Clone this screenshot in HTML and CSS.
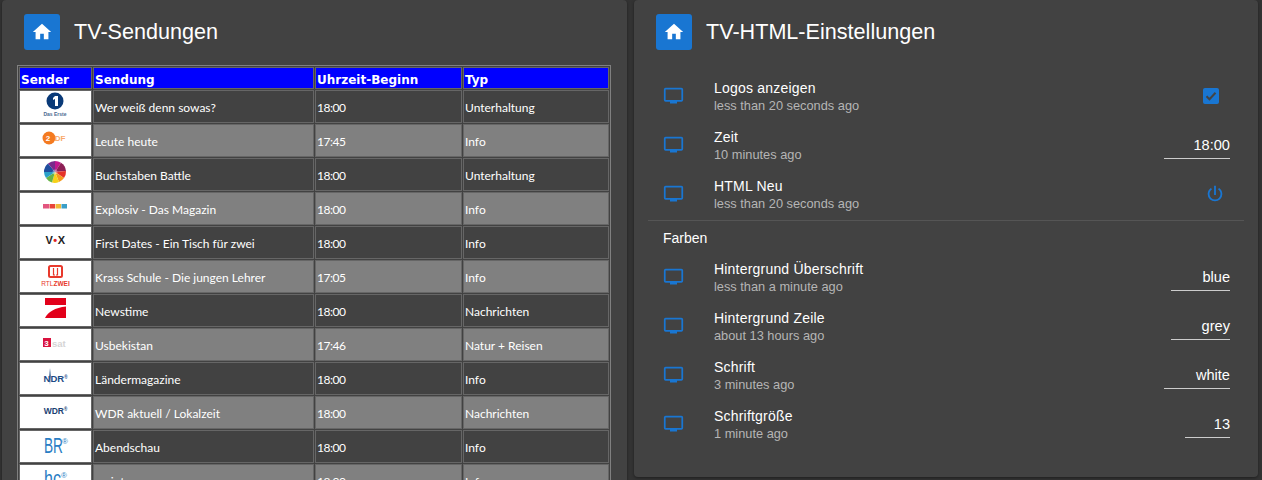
FILE: index.html
```html
<!DOCTYPE html>
<html lang="de">
<head>
<meta charset="utf-8">
<title>TV</title>
<link rel="stylesheet" href="styles.css">
</head>
<body>
<svg class="defs" width="0" height="0" aria-hidden="true">
  <symbol id="tv" viewBox="0 0 24 24"><path d="M21,17H3V5H21M21,3H3A2,2 0 0,0 1,5V17A2,2 0 0,0 3,19H8V21H16V19H21A2,2 0 0,0 23,17V5C23,3.89 22.1,3 21,3Z"/></symbol>
  <symbol id="home" viewBox="0 0 24 24"><path d="M10,20V14H14V20H19V12H22L12,3L2,12H5V20H10Z"/></symbol>
</svg>
<main class="page">
  <section class="card card-left">
    <header class="card-head">
      <span class="home-btn"><svg class="home-icon"><use href="#home"/></svg></span>
      <h1 class="card-title">TV-Sendungen</h1>
    </header>
    <table class="tv">
      <thead>
        <tr><th class="c1">Sender</th><th class="c2">Sendung</th><th class="c3">Uhrzeit-Beginn</th><th>Typ</th></tr>
      </thead>
      <tbody>
        <tr>
          <td class="logo"><svg viewBox="0 0 71 31" class="logo-svg"><circle cx="35" cy="10" r="8.500" fill="#0a3a78"/><path d="M35 5h3v10h-3V8l-2 1V7z" fill="#fff"/><text x="35" y="25" class="t-erste">Das Erste</text></svg></td>
          <td>Wer weiß denn sowas?</td><td>18:00</td><td>Unterhaltung</td>
        </tr>
        <tr class="alt">
          <td class="logo"><svg viewBox="0 0 71 31" class="logo-svg"><circle cx="29" cy="13" r="6.500" fill="#f47a20"/><text x="28" y="16" class="t-zdf-2">2</text><text x="40" y="16" class="t-zdf">DF</text></svg></td>
          <td>Leute heute</td><td>17:45</td><td>Info</td>
        </tr>
        <tr>
          <td class="logo"><svg viewBox="0 0 71 31" class="logo-svg"><path d="M35 2a11 11 0 0 1 6 1.800L35 13z" fill="#c2188e"/><path d="M41 3.800a11 11 0 0 1 5 8.200L35 13z" fill="#8c1f55"/><path d="M46 12a11 11 0 0 1-2 7L35 13z" fill="#e63329"/><path d="M44 19a11 11 0 0 1-5 4L35 13z" fill="#f59a1c"/><path d="M39 23a11 11 0 0 1-7 .6L35 13z" fill="#f7d117"/><path d="M32 23.600a11 11 0 0 1-6-4.600L35 13z" fill="#67b346"/><path d="M26 19a11 11 0 0 1-2-6L35 13z" fill="#2aa0c9"/><path d="M24 13a11 11 0 0 1 4-8.500L35 13z" fill="#1f4e9e"/><path d="M28 4.500a11 11 0 0 1 7-2.500V13z" fill="#7a2a8b"/><circle cx="35" cy="13" r="2.500" fill="#fff" opacity=".35"/></svg></td>
          <td>Buchstaben Battle</td><td>18:00</td><td>Unterhaltung</td>
        </tr>
        <tr class="alt">
          <td class="logo"><svg viewBox="0 0 71 31" class="logo-svg"><rect x="23" y="11" width="6" height="4.500" fill="#e2557f"/><rect x="29.500" y="11" width="5.500" height="4.500" fill="#e8453a"/><rect x="35.500" y="11" width="5.500" height="4.500" fill="#f0b93a"/><rect x="41.500" y="11" width="5.500" height="4.500" fill="#3a9fc8"/></svg></td>
          <td>Explosiv - Das Magazin</td><td>18:00</td><td>Info</td>
        </tr>
        <tr>
          <td class="logo"><svg viewBox="0 0 71 31" class="logo-svg"><text x="35.500" y="17" class="t-vox">V<tspan class="t-dot">•</tspan>X</text></svg></td>
          <td>First Dates - Ein Tisch für zwei</td><td>18:00</td><td>Info</td>
        </tr>
        <tr class="alt">
          <td class="logo"><svg viewBox="0 0 71 31" class="logo-svg"><rect x="29" y="5" width="13" height="11" rx="1.500" fill="none" stroke="#e8392c" stroke-width="2"/><path d="M33.500 7v7h1.500M37.500 7v7h-1.500" fill="none" stroke="#e8392c" stroke-width="1.200"/><text x="35.500" y="25" class="t-rtl2">RTL<tspan class="t-rtl2b">ZWEI</tspan></text></svg></td>
          <td>Krass Schule - Die jungen Lehrer</td><td>17:05</td><td>Info</td>
        </tr>
        <tr>
          <td class="logo"><svg viewBox="0 0 71 31" class="logo-svg"><path d="M25 3h21v7H25z" fill="#e2001a"/><path d="M25 23c3-6 10-10.500 21-11.500V23z" fill="#e2001a"/></svg></td>
          <td>Newstime</td><td>18:00</td><td>Nachrichten</td>
        </tr>
        <tr class="alt">
          <td class="logo"><svg viewBox="0 0 71 31" class="logo-svg"><rect x="23" y="9" width="8" height="9" fill="#d9123f"/><text x="26.500" y="17" class="t-3">3</text><text x="32" y="18" class="t-sat">sat</text></svg></td>
          <td>Usbekistan</td><td>17:46</td><td>Natur + Reisen</td>
        </tr>
        <tr>
          <td class="logo"><svg viewBox="0 0 71 31" class="logo-svg"><text x="35.500" y="19" class="t-ndr">NDR<tspan class="t-reg" dy="-3">®</tspan></text><path d="M30 5l.7 8-.7 9-.7-9z" fill="#1b4b86"/></svg></td>
          <td>Ländermagazine</td><td>18:00</td><td>Info</td>
        </tr>
        <tr class="alt">
          <td class="logo"><svg viewBox="0 0 71 31" class="logo-svg"><text x="35.500" y="17" class="t-wdr">WDR<tspan class="t-reg" dy="-3">®</tspan></text></svg></td>
          <td>WDR aktuell / Lokalzeit</td><td>18:00</td><td>Nachrichten</td>
        </tr>
        <tr>
          <td class="logo"><svg viewBox="0 0 71 31" class="logo-svg"><text x="24" y="22" class="t-br" textLength="19" lengthAdjust="spacingAndGlyphs">BR</text><text x="42" y="13" class="t-breg">®</text></svg></td>
          <td>Abendschau</td><td>18:00</td><td>Info</td>
        </tr>
        <tr class="alt">
          <td class="logo"><svg viewBox="0 0 71 31" class="logo-svg"><text x="24" y="21" class="t-br" textLength="17" lengthAdjust="spacingAndGlyphs">hc</text><text x="41" y="13" class="t-breg">®</text></svg></td>
          <td>maintower</td><td>18:00</td><td>Info</td>
        </tr>
      </tbody>
    </table>
  </section>

  <section class="card card-right">
    <header class="card-head">
      <span class="home-btn"><svg class="home-icon"><use href="#home"/></svg></span>
      <h1 class="card-title">TV-HTML-Einstellungen</h1>
    </header>
    <div class="settings">
      <div class="row">
        <svg class="tv-icon"><use href="#tv"/></svg>
        <div class="info"><div class="name">Logos anzeigen</div><div class="sub">less than 20 seconds ago</div></div>
        <span class="check"><svg viewBox="0 0 16 16"><path d="M3.500 8.200l3 3 6-6.400" fill="none" stroke="#444" stroke-width="2"/></svg></span>
      </div>
      <div class="row">
        <svg class="tv-icon"><use href="#tv"/></svg>
        <div class="info"><div class="name">Zeit</div><div class="sub">10 minutes ago</div></div>
        <div class="field w66">18:00</div>
      </div>
      <div class="row">
        <svg class="tv-icon"><use href="#tv"/></svg>
        <div class="info"><div class="name">HTML Neu</div><div class="sub">less than 20 seconds ago</div></div>
        <svg class="power" viewBox="0 0 24 24"><path d="M16.560,5.440L15.110,6.890C16.840,7.940 18,9.830 18,12A6,6 0 0,1 12,18A6,6 0 0,1 6,12C6,9.830 7.160,7.940 8.880,6.880L7.440,5.440C5.360,6.880 4,9.280 4,12A8,8 0 0,0 12,20A8,8 0 0,0 20,12C20,9.280 18.640,6.880 16.560,5.440M13,3H11V13H13"/></svg>
      </div>
      <div class="divider"></div>
      <div class="section-label">Farben</div>
      <div class="row">
        <svg class="tv-icon"><use href="#tv"/></svg>
        <div class="info"><div class="name">Hintergrund Überschrift</div><div class="sub">less than a minute ago</div></div>
        <div class="field w59">blue</div>
      </div>
      <div class="row">
        <svg class="tv-icon"><use href="#tv"/></svg>
        <div class="info"><div class="name">Hintergrund Zeile</div><div class="sub">about 13 hours ago</div></div>
        <div class="field w59">grey</div>
      </div>
      <div class="row">
        <svg class="tv-icon"><use href="#tv"/></svg>
        <div class="info"><div class="name">Schrift</div><div class="sub">3 minutes ago</div></div>
        <div class="field w66">white</div>
      </div>
      <div class="row">
        <svg class="tv-icon"><use href="#tv"/></svg>
        <div class="info"><div class="name">Schriftgröße</div><div class="sub">1 minute ago</div></div>
        <div class="field w45">13</div>
      </div>
    </div>
  </section>
</main>
</body>
</html>
```

FILE: styles.css
```css
* { box-sizing: border-box; }
html, body { margin: 0; height: 480px; overflow: hidden; }
body { background: #333; font-family: "Liberation Sans", Arial, sans-serif; color: #fff; }
.defs { position: absolute; }
.page { display: flex; align-items: flex-start; gap: 7px; padding-left: 2px; }
.card { background: #424242; border-radius: 4px; box-shadow: 0 1px 3px rgba(0,0,0,.4); }
.card-left { width: 625px; padding: 14px 15px 0; flex: none; }
.card-right { width: 624px; height: 477px; padding: 14px 14px 0; flex: none; }
.card-head { display: flex; align-items: center; height: 36px; padding-left: 8px; }
.card-left .card-head { padding-left: 7px; }
.home-btn { width: 36px; height: 36px; background: #1976d2; border-radius: 3px; display: flex; align-items: center; justify-content: center; flex: none; }
.home-icon { width: 22px; height: 22px; fill: #fff; }
.card-title { margin: 0 0 0 14px; font-size: 21.600px; font-weight: 400; line-height: 36px; }

.tv { margin-top: 15px; width: 594px; table-layout: fixed; border-collapse: separate; border-spacing: 1px; border: 1px solid #808080; font-family: Lato, sans-serif; font-size: 12px; }
.tv th, .tv td { border: 1px solid #666; padding: 0 0 0 1px; text-align: left; }
.tv th { height: 22px; background: #00f; font: 700 12px "DejaVu Sans", sans-serif; padding-top: 3px; }
.tv td { height: 33px; padding-top: 2px; }
.tv td:nth-child(3) { letter-spacing: -.5px; }
.c1 { width: 73px; }
.c2 { width: 221px; }
.c3 { width: 147px; }
.alt td { background: #808080; }
.tv td.logo { background: #fff; padding: 0; }
.logo-svg { display: block; width: 71px; height: 31px; font-family: "Liberation Sans", sans-serif; }
.logo-svg text { text-anchor: middle; }
.logo-svg .t-sat, .logo-svg .t-br, .logo-svg .t-breg { text-anchor: start; }
.t-erste { font-size: 5px; font-weight: 700; fill: #4a6a90; }
.t-zdf { font-size: 8px; font-weight: 700; fill: #f9a96a; }
.t-zdf-2 { font-size: 8px; font-weight: 700; fill: #fff; }
.t-vox { font-size: 11px; font-weight: 700; fill: #222; letter-spacing: .5px; }
.t-dot { fill: #d22; }
.t-rtl2 { font-size: 6.500px; fill: #e8392c; }
.t-rtl2b { font-weight: 700; }
.t-3 { font-size: 8px; font-weight: 700; fill: #fff; }
.t-sat { font-size: 9.500px; font-weight: 700; fill: #d5d5d5; }
.t-ndr { font-size: 9.500px; font-weight: 700; fill: #1b4b86; }
.t-wdr { font-size: 8.500px; font-weight: 700; fill: #1b3f73; }
.t-reg { font-size: 4.500px; }
.t-br { font-size: 22px; fill: #2a7dc4; }
.t-breg { font-size: 8px; fill: #2a7dc4; }

.settings { padding-top: 21.500px; }
.row { display: flex; align-items: center; height: 49px; padding: 0 14px 0 15px; }
.tv-icon { width: 21px; height: 21px; fill: #1976d2; flex: none; margin-bottom: 1px; }
.info { margin-left: 30px; flex: 1; min-width: 0; padding-top: 2px; }
.name { font-size: 14px; line-height: 17px; letter-spacing: .2px; }
.sub { font-size: 12.800px; line-height: 17px; color: #b5b5b5; }
.check { width: 16px; height: 16px; background: #1976d2; border-radius: 2px; margin-right: 11px; display: block; }
.check svg { display: block; }
.power { width: 22px; height: 22px; fill: #1976d2; margin-right: 4px; }
.field { height: 27px; line-height: 24px; text-align: right; font-size: 14.600px; border-bottom: 1px solid #ccc; padding-top: 1px; }
.w45 { width: 45px; }
.w59 { width: 59px; }
.w66 { width: 66px; }
.divider { height: 1px; background: #555; margin-top: 1px; }
.section-label { font-size: 14px; line-height: 17px; padding: 9px 0 6px 15px; }
```
